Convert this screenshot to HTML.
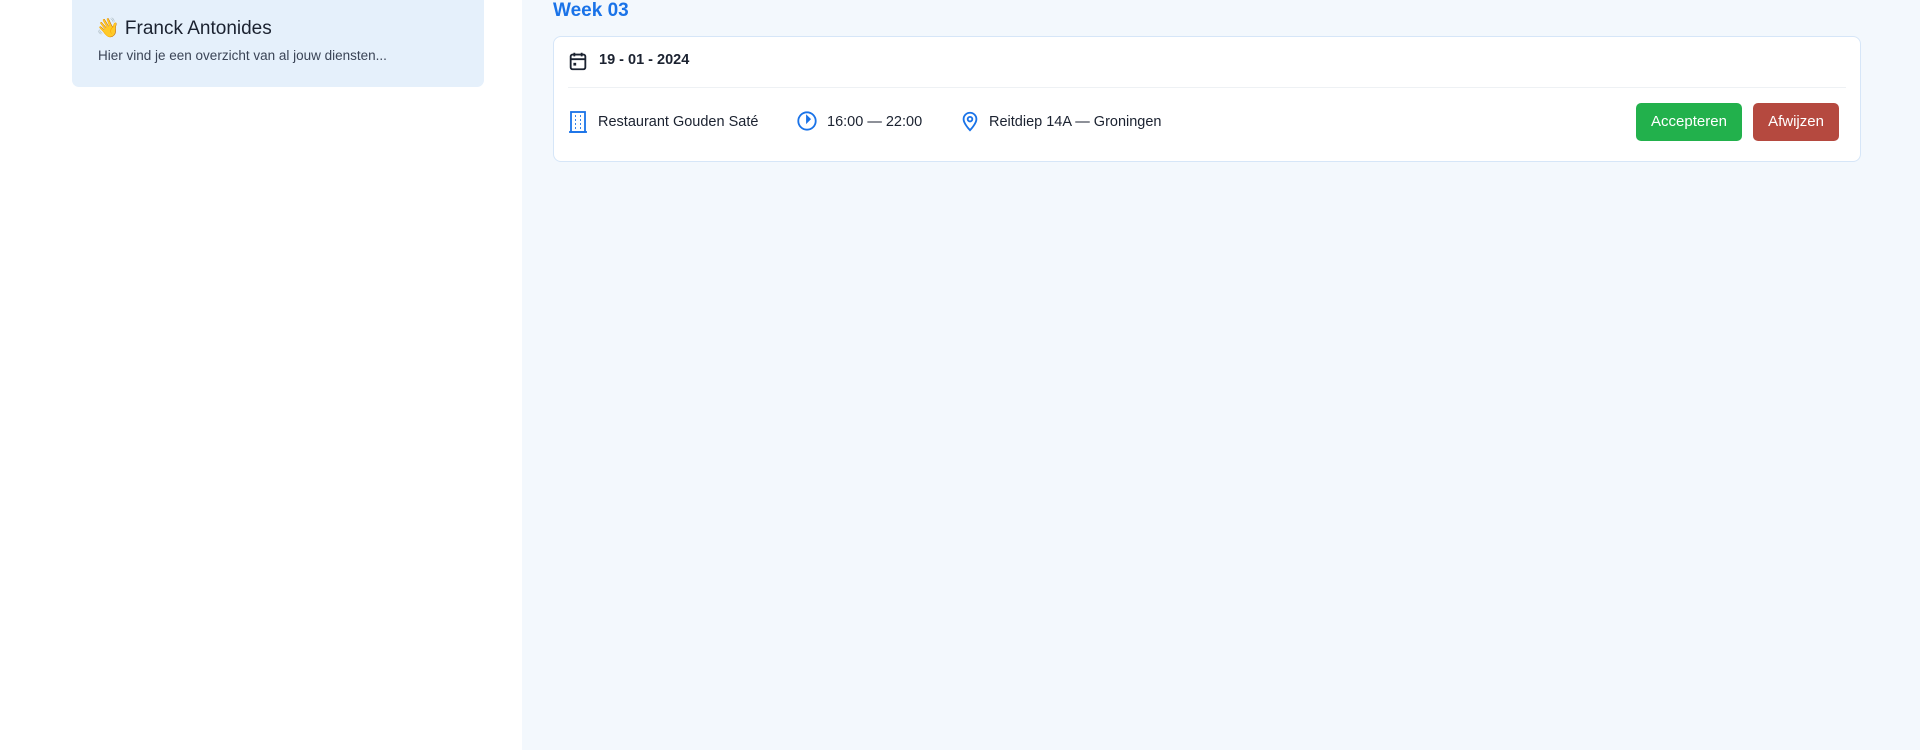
<!DOCTYPE html>
<html><head><meta charset="utf-8"><style>
*{margin:0;padding:0;box-sizing:border-box}
body{width:1920px;height:750px;overflow:hidden;background:#fff;font-family:"Liberation Sans",sans-serif;position:relative;color:#1b2230}
.main{position:absolute;left:522px;top:0;width:1398px;height:750px;background:#f3f8fd}
.lc{position:absolute;left:72px;top:-10px;width:412px;height:97px;background:#e5f0fb;border-radius:7px}
.h{position:absolute;left:96px;top:16px;font-size:19px;color:#1b2230}
.s{position:absolute;left:98px;top:48px;font-size:13.5px;color:#3a4456}
.wk{position:absolute;left:553px;top:0px;font-size:19px;font-weight:bold;color:#1a73e8}
.card{position:absolute;left:553px;top:36px;width:1308px;height:126px;background:#fff;border:1px solid #d6e6f8;border-radius:8px}
.div{position:absolute;left:14px;right:14px;top:50px;height:1px;background:#eef1f4}
.t{position:absolute;font-size:14.5px;white-space:nowrap}
svg{position:absolute}
.btn{position:absolute;top:66px;height:38px;border-radius:5px;color:#fff;font-size:15px;text-align:center;line-height:38px}
</style></head><body>
<div class="main"></div>
<div class="lc"></div>
<div class="h">👋 Franck Antonides</div>
<div class="s">Hier vind je een overzicht van al jouw diensten...</div>
<div class="wk">Week 03</div>
<div class="card">
<svg style="left:13px;top:13px" width="22" height="22" viewBox="0 0 24 24" fill="none" stroke="#1b2230" stroke-width="2"><rect x="4" y="5" width="16" height="16" rx="2"/><path d="M4 10h16M8 3v4M16 3v4"/><rect x="7" y="14" width="3" height="3" fill="#1b2230" stroke="none"/></svg>
<div class="t" style="left:45px;top:15px;font-weight:bold">19 - 01 - 2024</div>
<div class="div"></div>
<svg style="left:13px;top:73px" width="22" height="24" viewBox="0 0 22 24" fill="none" stroke="#1a73e8" stroke-width="1.8"><rect x="4" y="2" width="14" height="20"/><path d="M2 22h18"/><path d="M8 6h1M13 6h1M8 10h1M13 10h1M8 14h1M13 14h1M8 18h1M13 18h1"/></svg>
<div class="t" style="left:44px;top:77px">Restaurant Gouden Saté</div>
<svg style="left:242px;top:73px" width="22" height="22" viewBox="0 0 24 24" fill="none" stroke="#1a73e8" stroke-width="2"><circle cx="12" cy="12" r="9.5"/><path d="M12 7v6l3-3z" fill="#1a73e8"/></svg>
<div class="t" style="left:273px;top:77px">16:00 — 22:00</div>
<svg style="left:405px;top:72px" width="22" height="24" viewBox="0 0 24 24" fill="none" stroke="#1a73e8" stroke-width="2"><path d="M12 22s-7-7-7-12a7 7 0 0 1 14 0c0 5-7 12-7 12z"/><circle cx="12" cy="10" r="2.5"/></svg>
<div class="t" style="left:435px;top:77px">Reitdiep 14A — Groningen</div>
<div class="btn" style="left:1082px;width:106px;background:#22b14c">Accepteren</div>
<div class="btn" style="left:1199px;width:86px;background:#b5493f">Afwijzen</div>
</div>
</body></html>
